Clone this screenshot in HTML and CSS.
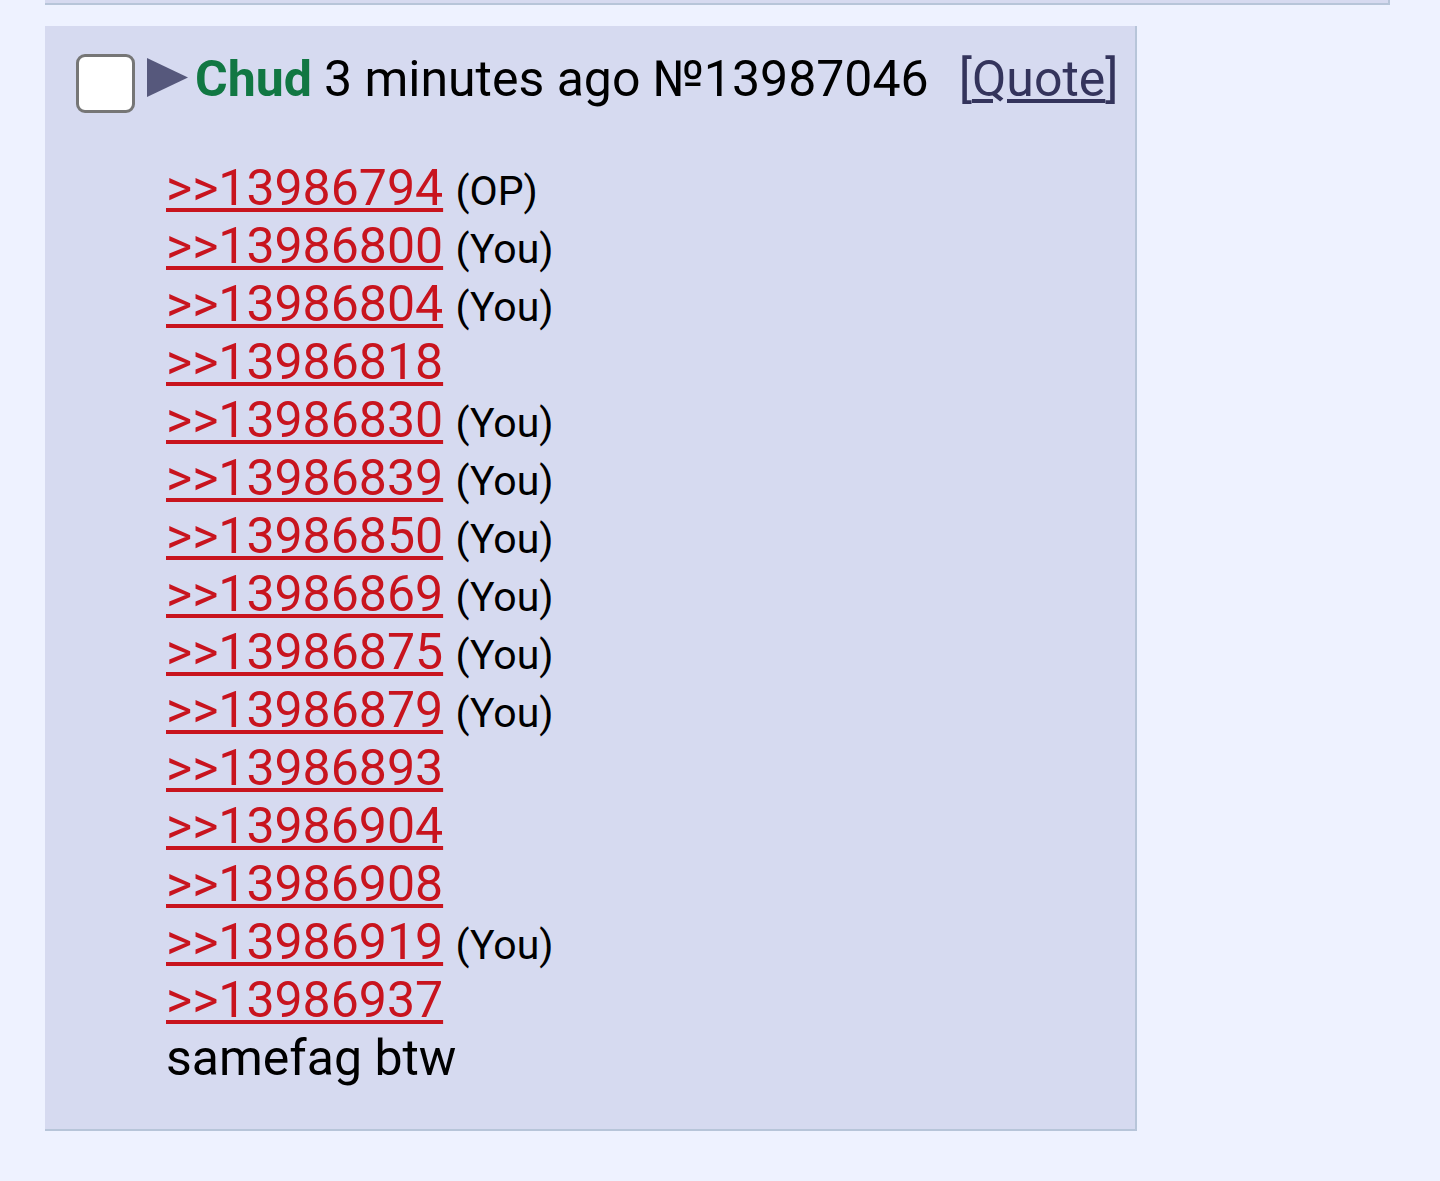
FILE: index.html
```html
<!DOCTYPE html>
<html lang="en">

<head>
    <meta charset="UTF-8">
    <meta name="viewport" content="width=device-width, initial-scale=1.0">
    <title>Thread</title>
    <link rel="stylesheet" href="styles.css">
</head>

<body>

    <div class="prev-post"></div>

    <div class="post">
        <div class="post-info">
            <span class="checkbox"></span>
            <svg class="arrow" width="41" height="39" viewBox="0 0 41 39">
                <polygon points="0,0 41,19.5 0,39" fill="#56587c"/>
            </svg>
            <span class="name">Chud</span>
            <span class="date">3 minutes ago</span>
            <span class="post-num">№13987046</span>
            <span class="quote-btn">[<a href="#">Quote</a>]</span>
        </div>

        <blockquote class="message">
            <a class="quotelink" href="#">&gt;&gt;13986794</a> <span class="you">(OP)</span><br>
            <a class="quotelink" href="#">&gt;&gt;13986800</a> <span class="you">(You)</span><br>
            <a class="quotelink" href="#">&gt;&gt;13986804</a> <span class="you">(You)</span><br>
            <a class="quotelink" href="#">&gt;&gt;13986818</a><br>
            <a class="quotelink" href="#">&gt;&gt;13986830</a> <span class="you">(You)</span><br>
            <a class="quotelink" href="#">&gt;&gt;13986839</a> <span class="you">(You)</span><br>
            <a class="quotelink" href="#">&gt;&gt;13986850</a> <span class="you">(You)</span><br>
            <a class="quotelink" href="#">&gt;&gt;13986869</a> <span class="you">(You)</span><br>
            <a class="quotelink" href="#">&gt;&gt;13986875</a> <span class="you">(You)</span><br>
            <a class="quotelink" href="#">&gt;&gt;13986879</a> <span class="you">(You)</span><br>
            <a class="quotelink" href="#">&gt;&gt;13986893</a><br>
            <a class="quotelink" href="#">&gt;&gt;13986904</a><br>
            <a class="quotelink" href="#">&gt;&gt;13986908</a><br>
            <a class="quotelink" href="#">&gt;&gt;13986919</a> <span class="you">(You)</span><br>
            <a class="quotelink" href="#">&gt;&gt;13986937</a><br>
            samefag btw
        </blockquote>
    </div>

</body>

</html>
```

FILE: styles.css
```css
*{
    margin: 0;
    box-sizing: border-box;
}
body{
    background: #eef2ff;
    font-family: Roboto, "Noto Sans", sans-serif;
    font-size: 50px;
    line-height: 58px;
    color: #000;
}
.prev-post{
    margin-left: 45px;
    width: 1345px;
    height: 5px;
    background: #d6daf0;
    border-right: 2px solid #b7c5d9;
    border-bottom: 2px solid #b7c5d9;
}
.post{
    margin: 21px 0 0 45px;
    width: 1092px;
    padding: 24px 0 42px 31px;
    background: #d6daf0;
    border-right: 2px solid #b7c5d9;
    border-bottom: 2px solid #b7c5d9;
}
.post-info{
    display: flex;
    align-items: flex-start;
    white-space: nowrap;
}
.checkbox{
    width: 59px;
    height: 59px;
    margin-top: 4px;
    background: #fff;
    border: 3px solid #767676;
    border-radius: 9px;
}
.arrow{
    margin: 8px 7px 0 12px;
}
.name{
    color: #117743;
    font-weight: bold;
}
.date{
    margin-left: 12px;
}
.post-num{
    margin-left: 12px;
}
.quote-btn{
    margin-left: 30px;
    color: #34345c;
}
.quote-btn a{
    color: #34345c;
    text-decoration-thickness: 4px;
    text-underline-offset: 3px;
}
.message{
    margin: 46px 0 0 90px;
}
.quotelink{
    color: #c8141e;
    text-decoration-thickness: 4px;
    text-underline-offset: 3px;
}
.you{
    font-size: 41px;
    line-height: 1;
}
```
